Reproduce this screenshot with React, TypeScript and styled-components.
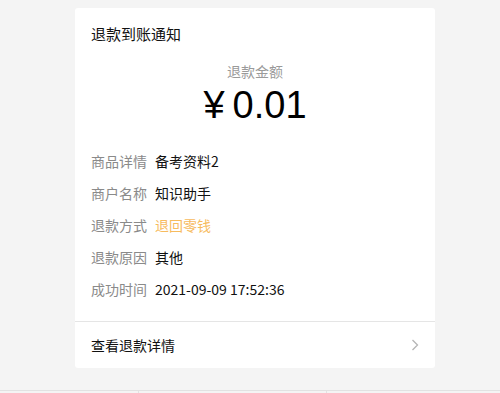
import React from "react";
import styled, { createGlobalStyle } from "styled-components";

const GlobalStyle = createGlobalStyle`
  html, body {
    margin: 0;
    padding: 0;
    background: #f4f4f4;
    font-family: "Noto Sans CJK SC", "Noto Sans", sans-serif;
    overflow: hidden;
  }
`;

const Page = styled.div`
  min-height: 100vh;
  padding-top: 8px;
  box-sizing: border-box;
`;

const Card = styled.div`
  width: 360px;
  margin-left: 75px;
  background: #fff;
  border-radius: 3px;
`;

const Body = styled.div`
  padding: 16px 16px 22px;
`;

const Title = styled.div`
  font-size: 15px;
  line-height: 20px;
  color: #111;
`;

const AmountBlock = styled.div`
  display: flex;
  flex-direction: column;
  align-items: center;
  margin-top: 17px;
`;

const AmountLabel = styled.div`
  font-size: 14px;
  line-height: 20px;
  color: #9a9a9a;
`;

const Amount = styled.div`
  margin-top: 3px;
  font-family: "Liberation Sans", Arial, sans-serif;
  font-size: 38px;
  line-height: 43px;
  color: #000;
  display: flex;
  align-items: baseline;
  gap: 8px;
`;

const Rows = styled.div`
  display: flex;
  flex-direction: column;
  gap: 12px;
  margin-top: 24px;
`;

const Row = styled.div`
  display: flex;
  font-size: 14px;
  line-height: 20px;
`;

const Label = styled.span`
  width: 64px;
  color: #8a8a8a;
`;

const Value = styled.span<{ $accent?: boolean }>`
  color: ${(p) => (p.$accent ? "#f7bb5e" : "#111")};
`;

const Footer = styled.div`
  display: flex;
  align-items: center;
  justify-content: space-between;
  height: 46px;
  padding: 0 16px;
  border-top: 1px solid #e5e5e5;
  font-size: 14px;
  color: #111;
`;

const TabBar = styled.div`
  position: fixed;
  left: 0;
  right: 0;
  top: 390px;
  height: 50px;
  display: flex;
  border-top: 1px solid #e2e2e2;
  background: #f4f4f4;
`;

const Tab = styled.div<{ $w: number }>`
  width: ${(p) => p.$w}px;
  border-right: 1px solid #e2e2e2;
  &:last-child {
    border-right: none;
    flex: 1;
  }
`;

const rows = [
  { label: "商品详情", value: "备考资料2" },
  { label: "商户名称", value: "知识助手" },
  { label: "退款方式", value: "退回零钱", accent: true },
  { label: "退款原因", value: "其他" },
  { label: "成功时间", value: "2021-09-09 17:52:36" },
];

export default function App() {
  return (
    <Page>
      <GlobalStyle />
      <Card>
        <Body>
          <Title>退款到账通知</Title>
          <AmountBlock>
            <AmountLabel>退款金额</AmountLabel>
            <Amount>
              <span>¥</span>
              <span>0.01</span>
            </Amount>
          </AmountBlock>
          <Rows>
            {rows.map((r) => (
              <Row key={r.label}>
                <Label>{r.label}</Label>
                <Value $accent={r.accent}>{r.value}</Value>
              </Row>
            ))}
          </Rows>
        </Body>
        <Footer>
          <span>查看退款详情</span>
          <svg width="8" height="12" viewBox="0 0 8 12">
            <path d="M1.5 1 L6.5 6 L1.5 11" fill="none" stroke="#b5b5b5" strokeWidth="1.3" />
          </svg>
        </Footer>
      </Card>
      <TabBar>
        <Tab $w={138} />
        <Tab $w={187} />
        <Tab $w={175} />
      </TabBar>
    </Page>
  );
}
